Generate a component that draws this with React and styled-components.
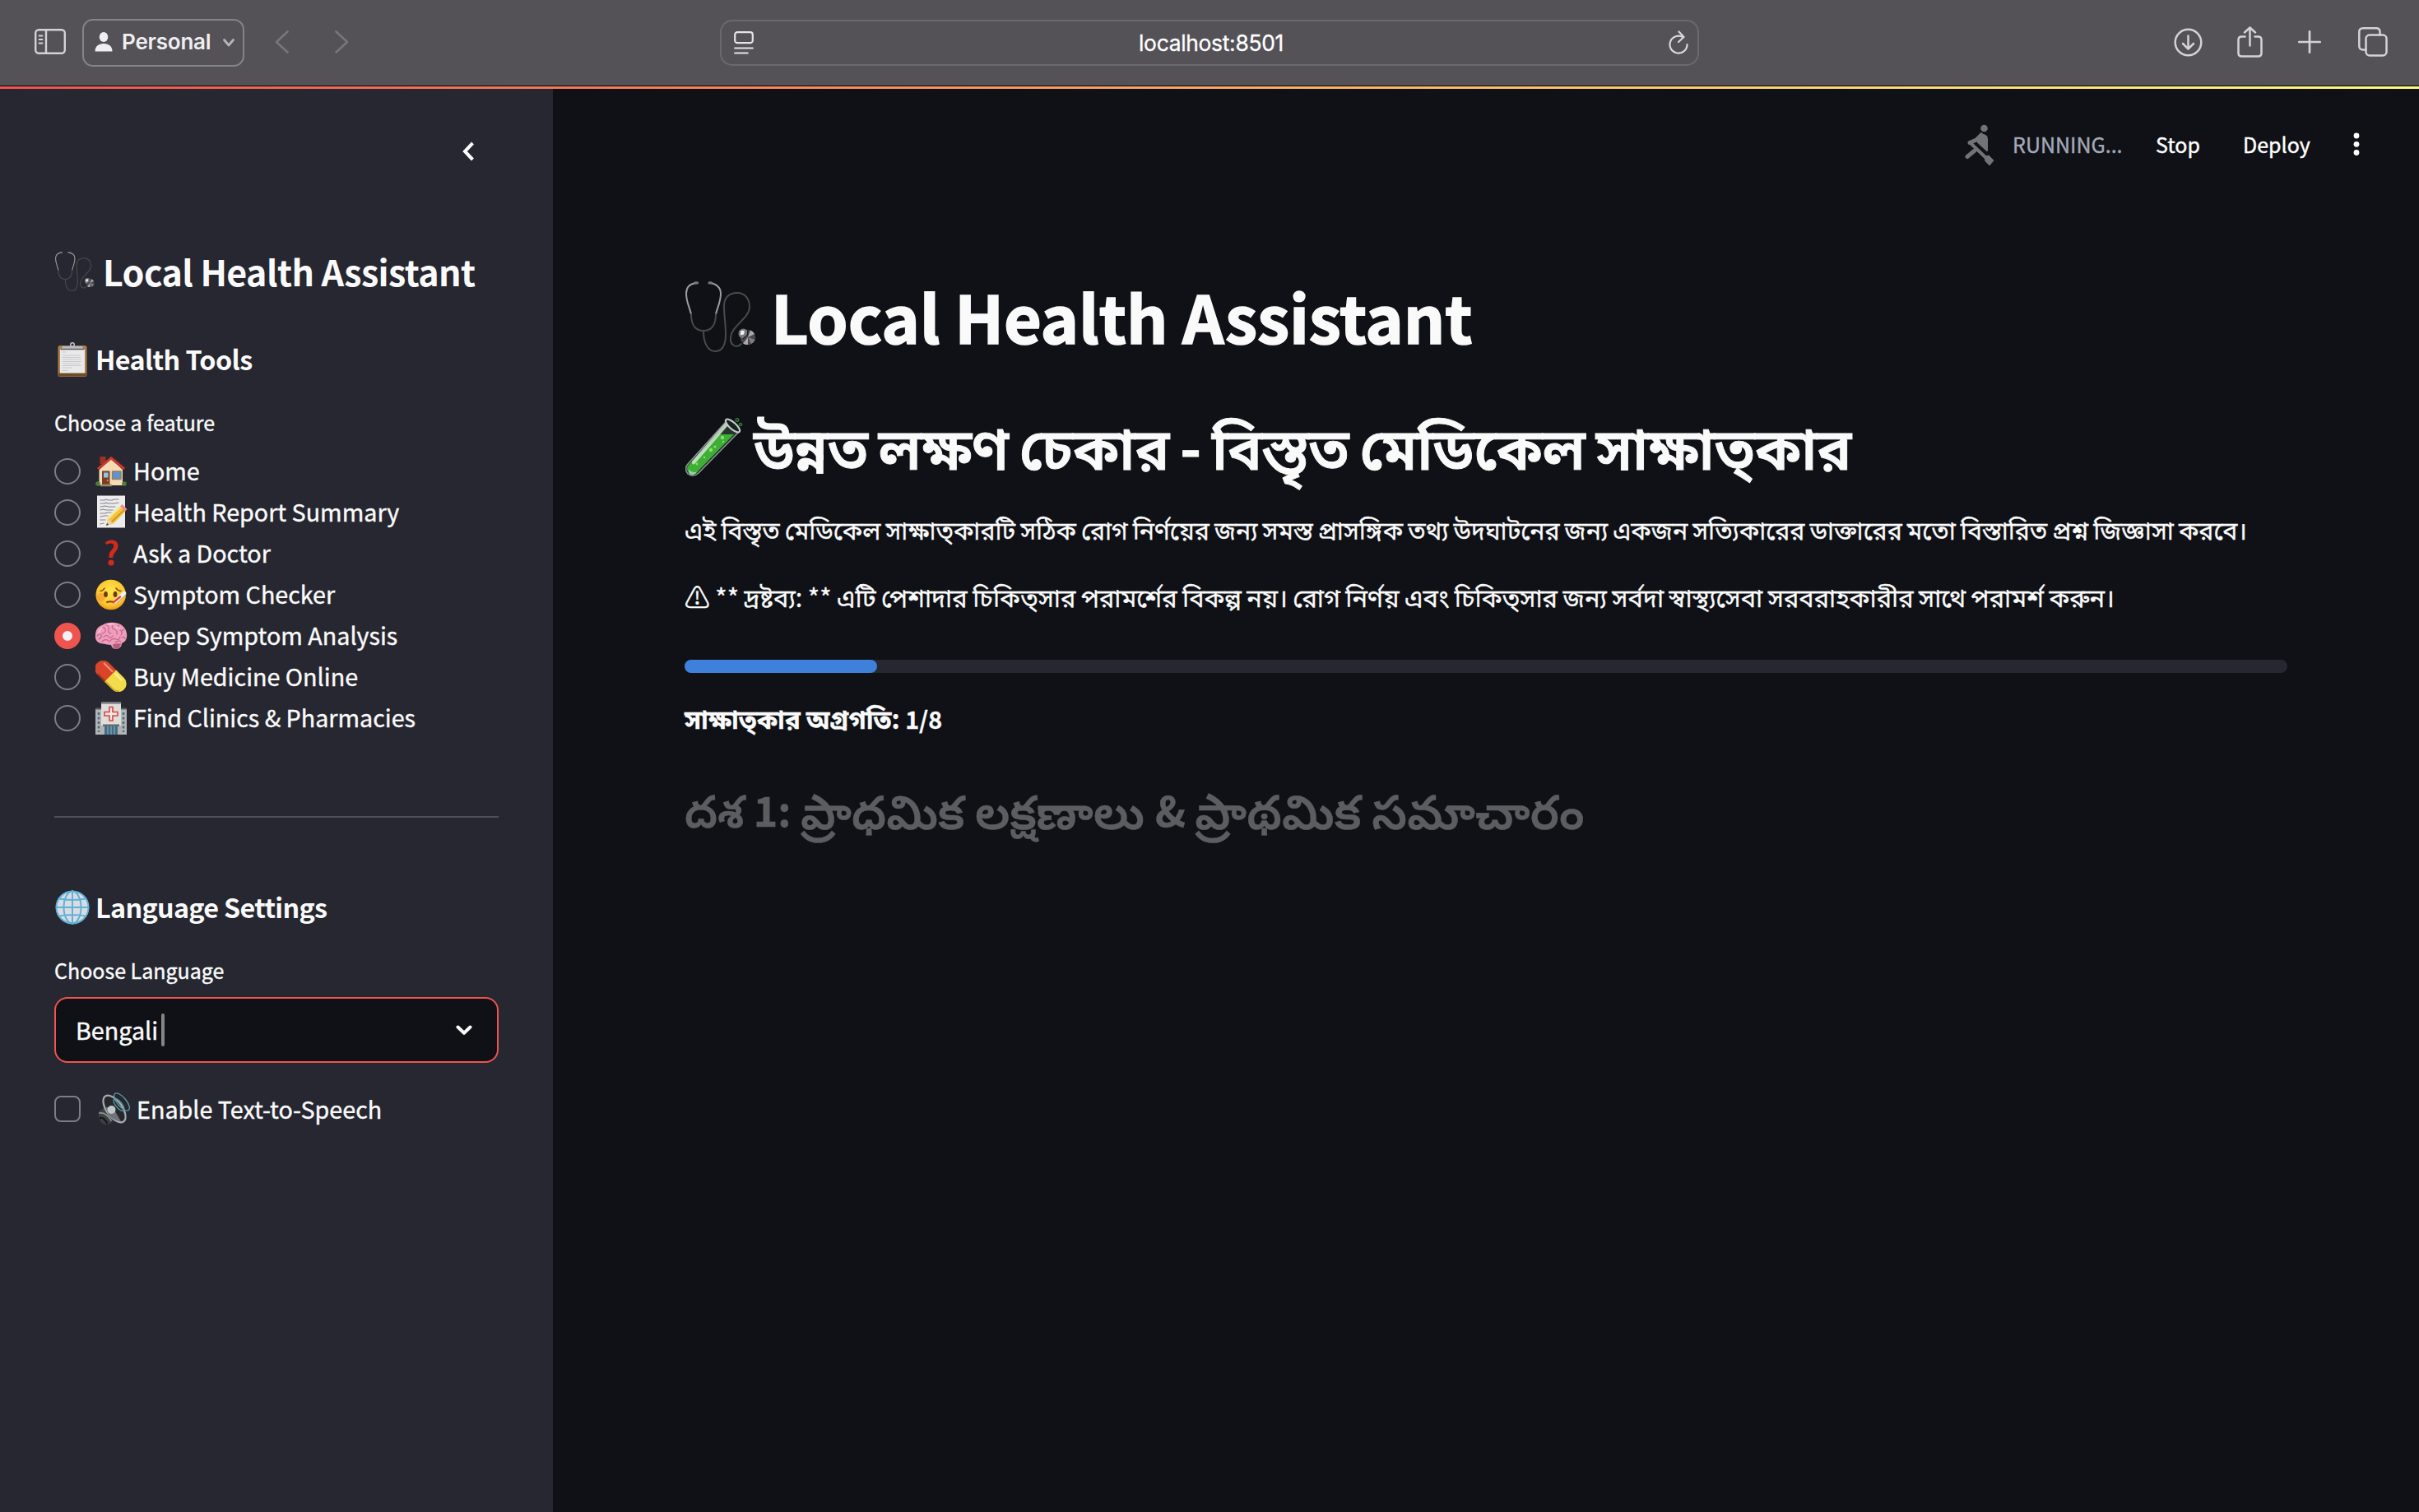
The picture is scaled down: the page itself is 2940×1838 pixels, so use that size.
import React from "react";
import styled, { createGlobalStyle } from "styled-components";

const sans = `"Noto Sans CJK SC", "Noto Sans", "Noto Sans Bengali", "Noto Sans Telugu", sans-serif`;

const Global = createGlobalStyle`
  * { box-sizing: border-box; }
  body { margin: 0; background: #0f1116; }
`;

const Page = styled.div`
  width: 2940px;
  height: 1838px;
  display: flex;
  flex-direction: column;
  background: #0f1116;
  color: #fafafa;
  font-family: ${sans};
  overflow: hidden;
`;

const BrowserBar = styled.header`
  flex: none;
  height: 104px;
  display: flex;
  align-items: flex-start;
  background: #545257;
  font-family: Inter, "Liberation Sans", sans-serif;
`;

const Icon = styled.svg`
  display: block;
  flex: none;
  width: ${(p) => p.$w}px;
  height: ${(p) => p.$h}px;
  margin-left: ${(p) => p.$ml || 0}px;
  margin-right: ${(p) => p.$mr || 0}px;
  margin-top: ${(p) => p.$mt || 0}px;
  fill: none;
  stroke-linecap: round;
  stroke-linejoin: round;
`;

const ProfileButton = styled.button`
  display: flex;
  align-items: center;
  width: 197px;
  height: 58px;
  margin: 23px 0 0 20px;
  padding: 0 10px 0 13px;
  border: 2px solid #858487;
  border-radius: 13px;
  background: none;
  color: #efeef0;
  font: 600 26px Inter, sans-serif;
  letter-spacing: -0.2px;
`;

const ProfileName = styled.span`
  width: 122px;
  margin-left: 11px;
  margin-top: -3px;
  text-align: left;
  white-space: nowrap;
  line-height: 30px;
`;

const AddressBar = styled.div`
  display: flex;
  align-items: center;
  justify-content: space-between;
  width: 1190px;
  height: 56px;
  margin: 24px 0 0 451px;
  padding: 0 11px 0 15px;
  border: 2px solid #6a696d;
  border-radius: 15px;
  color: #fff;
  font-size: 26.4px;
  letter-spacing: -0.3px;
  -webkit-text-stroke: 0.3px #fff;
`;

const Progress = styled.div`
  flex: none;
  height: 4px;
  border-top: 1px solid #000;
  background: linear-gradient(to right, #f0544f, #f98a5f 33%, #ffcf70 70%, #fffd80);
`;

const Body = styled.div`
  flex: 1;
  display: flex;
`;

const Sidebar = styled.aside`
  flex: none;
  width: 672px;
  padding: 0 66px;
  background: #262730;
  display: flex;
  flex-direction: column;
`;

const CollapseRow = styled.div`
  display: flex;
  justify-content: flex-end;
  height: 192px;
  padding: 64px 29px 0 0;
`;

const Heading = styled.h2`
  display: flex;
  align-items: center;
  margin: ${(p) => p.$top || 0}px 0 0;
  height: ${(p) => p.$h}px;
  font-size: ${(p) => p.$size}px;
  font-weight: ${(p) => p.$weight || 600};
  line-height: ${(p) => p.$h}px;
  letter-spacing: ${(p) => p.$track || 0}px;
  color: ${(p) => p.$color || "#fafafa"};
  white-space: nowrap;
  -webkit-text-stroke: ${(p) => p.$stroke || 0}px currentColor;
`;

/* Indic script runs are set slightly larger than the Latin text around them. */
const Script = styled.span`
  font-size: ${(p) => p.$scale}em;
  word-spacing: ${(p) => p.$gap || 0}px;
  white-space: pre;
`;

const EmojiSlot = styled.span`
  flex: none;
  display: flex;
  align-items: center;
  width: ${(p) => p.$w}px;
  height: 100%;
  padding-left: ${(p) => p.$pl || 0}px;
  padding-top: ${(p) => p.$pt || 0}px;
`;

const FieldLabel = styled.label`
  display: block;
  height: 40px;
  margin-top: ${(p) => p.$top}px;
  font-size: 25px;
  line-height: 40px;
  -webkit-text-stroke: 0.4px currentColor;
`;

const RadioList = styled.div`
  margin-top: 15px;
  display: flex;
  flex-direction: column;
`;

const OptionRow = styled.div`
  display: flex;
  align-items: center;
  height: 50px;
  margin-top: ${(p) => p.$top || 0}px;
  font-size: 28.7px;
  line-height: ${(p) => p.$line || 48}px;
`;

const Radio = styled.span`
  flex: none;
  width: 32px;
  height: 32px;
  border-radius: 50%;
  border: ${(p) => (p.$on ? "10px solid #f0544f" : "2px solid #7d7d83")};
  background: ${(p) => (p.$on ? "#f0f2f6" : "transparent")};
`;

const Checkbox = styled.span`
  flex: none;
  width: 32px;
  height: 32px;
  border-radius: 8px;
  border: 2px solid #7d7d83;
`;

const OptionText = styled.span`
  height: 50px;
  white-space: nowrap;
  -webkit-text-stroke: 0.4px currentColor;
`;

const Divider = styled.hr`
  width: 100%;
  height: 2px;
  margin: 94px 0 0;
  border: 0;
  background: #4e4f58;
`;

const Select = styled.div`
  display: flex;
  align-items: center;
  height: 80px;
  margin-top: 13px;
  padding: 0 30px 0 24px;
  border: 2px solid #f0544f;
  border-radius: 16px;
  background: #0f1116;
  font-size: 28.7px;
`;

const SelectValue = styled.span`
  line-height: 40px;
  -webkit-text-stroke: 0.4px currentColor;
`;

const Caret = styled.span`
  width: 4px;
  height: 40px;
  margin-left: 4px;
  border-radius: 2px;
  background: #858586;
`;

const Spacer = styled.span`
  flex: 1;
`;

const Main = styled.main`
  flex: 1;
  display: flex;
  flex-direction: column;
  padding: 0 160px;
`;

const StatusBar = styled.div`
  display: flex;
  align-items: center;
  height: 136px;
  margin-right: -88px;
  justify-content: flex-end;
  font-size: 25px;
  line-height: 40px;
`;

const StatusText = styled.span`
  flex: none;
  width: ${(p) => p.$w}px;
  margin-top: -2px;
  color: ${(p) => p.$color || "#fff"};
  white-space: nowrap;
  -webkit-text-stroke: 0.4px currentColor;
`;

const Paragraph = styled.p`
  margin: ${(p) => p.$top}px 0 0;
  height: 50px;
  font-size: 28.7px;
  font-weight: ${(p) => p.$weight || 400};
  line-height: 50px;
  white-space: nowrap;
  -webkit-text-stroke: 0.3px currentColor;
`;

const Track = styled.div`
  height: 16px;
  margin-top: 52px;
  border-radius: 8px;
  background: #262730;
`;

const TrackFill = styled.div`
  width: 12%;
  height: 16px;
  border-radius: 8px;
  background: #3f80da;
`;

function Stethoscope({ size }) {
  return (
    <Icon viewBox="0 0 86 86" $w={size} $h={size}>
      <g strokeWidth="2">
        <path d="M13 2C5 3 1 8 1 15C1 25 5 31 7 40" stroke="#989da6" />
        <path d="M30 2C38 3 43 8 43 15C43 25 39 31 37 40" stroke="#989da6" />
        <path d="M7 40C7 51 11 60 22 60C33 60 37 51 37 40M22 61C22 74 27 85 36 85C46 85 49 75 49 64C49 52 47 42 47 30C47 20 53 14 63 14C73 14 78 22 78 31C78 45 56 54 55 68C54 78 62 82 68 76" stroke="#4b4a4a" />
        <path d="M12 1.800h2.500M29 1.800h2.500" stroke="#77787c" strokeWidth="3.200" />
      </g>
      <circle cx="76" cy="68" r="9.200" fill="#4a484c" />
      <path d="M76 68L79 59.500A9 9 0 0 1 84 64zM76 68L70 75.500A9 9 0 0 0 76 77z" fill="#aaa8ac" />
      <path d="M76 68L84.500 71A9 9 0 0 1 80 76z" fill="#807e83" />
      <circle cx="70.500" cy="63.500" r="6" fill="#77787e" />
      <path d="M67 60.500a4.500 4.500 0 0 1 5 0l-1 4l-4 1z" fill="#f2f3f5" />
      <path d="M76 59.500l-0.500 6l-5 4" stroke="#1c1c20" strokeWidth="1.500" />
    </Icon>
  );
}

function Clipboard() {
  return (
    <Icon viewBox="0 0 36 42" $w={36} $h={42} $ml={4} $mt={2}>
      <rect x="0.5" y="4" width="35" height="38" rx="2.5" fill="#a97f4b" />
      <rect x="1" y="37.500" width="34" height="4" rx="1.500" fill="#6e4c25" />
      <rect x="3" y="8" width="30" height="29.500" fill="#e9e9ea" />
      <path d="M6 5h24l2 4H4z" fill="#b9bcc6" />
      <path d="M4 8.500h28" stroke="#5d5d64" strokeWidth="1.500" />
      <circle cx="18" cy="3" r="2.300" stroke="#b9bcc6" strokeWidth="1.600" />
      <path d="M6 12h4M6 16h21M6 18.500h22M6 21h22M6 23.500h22M6 26h21M6 28.500h22M6 31h11M6 34.500h6" stroke="#c9c9cc" strokeWidth="1.100" />
    </Icon>
  );
}

function House() {
  return (
    <Icon viewBox="0 0 38 38" $w={38} $h={38}>
      <path d="M5.500 1h7v9h-7z" fill="#9c3125" />
      <path d="M19 3L4.500 17v19h28.500V17z" fill="#f3dcb4" />
      <path d="M19 1L2 15L4 17L19 4.500L34 17l2-2z" fill="#cc3a30" stroke="#a52b24" strokeWidth="0.600" />
      <rect x="8" y="18.500" width="9.500" height="18" fill="#7c3d22" />
      <rect x="10" y="20.500" width="5.500" height="6" fill="#8cc6ee" />
      <circle cx="14.800" cy="30" r="1" fill="#e0b050" />
      <rect x="20.500" y="19" width="10.500" height="9.500" fill="#5d94cf" stroke="#9a7b5a" strokeWidth="1.400" />
      <path d="M7 36h12" stroke="#9b8a78" strokeWidth="2.500" />
      <circle cx="3" cy="34" r="2.800" fill="#4b7f37" />
      <circle cx="35" cy="34" r="2.800" fill="#4b7f37" />
    </Icon>
  );
}

function Memo() {
  return (
    <Icon viewBox="0 0 38 40" $w={38} $h={40} $ml={1} $mt={-2}>
      <rect x="1" y="0.500" width="34" height="39" fill="#ececec" />
      <path d="M5 6h5l2-1l3 1h4l3-1h5M5 10l4 0l3-1l2 1h8l5-1M5 14l6-1l4 1h8M5 18l3-1l4 1h8M5 22h6l3-1h4M5 26l5-1h4M5 30h6M5 35l4-1" stroke="#85858a" strokeWidth="1.200" />
      <path d="M12 37l2.500-9L29 13.500l6.500 6L21 34.500z" fill="#f3c33c" />
      <path d="M14 29L30 14" stroke="#fbe184" strokeWidth="2" />
      <path d="M18 33L34 18" stroke="#c88d1d" strokeWidth="1.600" />
      <path d="M12 37l2.500-8.500l6 5.500z" fill="#e8cfa4" />
      <path d="M12 37l1-3l2 1.700z" fill="#333" />
      <path d="M29 13.500l2.500-2.500l6 6l-2.500 2.500z" fill="#ef8d92" />
    </Icon>
  );
}

function Question() {
  return (
    <Icon viewBox="0 0 18 32" $w={18} $h={32} $ml={11} $mt={-2}>
      <path d="M1 3.500C3 1.500 5.500 0.500 8.500 0.500C13.500 0.500 16.500 3.200 16.500 7.500C16.500 11 14.500 13.500 12.500 16C11 18 10.300 19 10.300 22H5.500C5.300 18 6 16 7.800 13.500C9.500 11.300 11.300 9.800 11.300 7.500C11.300 5.500 10 4.300 7.500 4.500C5.500 4.600 3.500 5.200 2 6z" fill="#d42a1e" />
      <circle cx="8" cy="28" r="3.600" fill="#d42a1e" />
    </Icon>
  );
}

function SickFace() {
  return (
    <Icon viewBox="0 0 38 38" $w={38} $h={38} $mt={-1}>
      <defs>
        <radialGradient id="face" cx="50%" cy="40%" r="60%">
          <stop offset="0" stopColor="#ffe64d" />
          <stop offset="0.750" stopColor="#fdc52f" />
          <stop offset="1" stopColor="#e89a1c" />
        </radialGradient>
      </defs>
      <circle cx="18.700" cy="19" r="18.300" fill="url(#face)" />
      <circle cx="7" cy="22" r="5" fill="#f58a3c" opacity="0.500" />
      <ellipse cx="12.500" cy="18.500" rx="2.400" ry="3.400" fill="#6b3d13" />
      <ellipse cx="24" cy="18.500" rx="2.400" ry="3.400" fill="#6b3d13" />
      <path d="M6 14.500q3.500-0.500 5-3.500M25 11q2 3 6 3.500" stroke="#8b5417" strokeWidth="1.600" />
      <path d="M14 28q4-1.500 8 0" stroke="#8b4414" strokeWidth="2" />
      <path d="M24 27L35 17" stroke="#eef0f4" strokeWidth="4.500" />
      <path d="M22 28L30 21.500" stroke="#e2433b" strokeWidth="2.400" />
      <path d="M26 29L37 19" stroke="#9aa3b5" strokeWidth="0.800" />
    </Icon>
  );
}

function Brain() {
  return (
    <Icon viewBox="0 0 40 34" $w={40} $h={34} $ml={-1} $mt={-1}>
      <path d="M20 28C17 27.500 14 27.500 10 26.500C4 26.500 0 22 1 16C1 11 3 6 9 4C13 1 19 0 25 1C33 2 38 7 39 14C40 20 38 24 33 26C33 30 30 33 26 33C22 33 20.500 30 20 28z" fill="#ee9dbb" />
      <path d="M22 27.500q5-2 10-1q-1 6-6 6.500q-3.500 0-4-5.500z" fill="#b0607a" />
      <g stroke="#c4668c" strokeWidth="1.200">
        <path d="M3 17q4-4 5-1t-3 5M7 8q5-3 6 1t-4 5M14 4q4 0 3 5t3 5M22 3q-2 5 2 6t3 6M29 4q-2 4 2 6t1 6M36 9q-4 1-3 5M11 18q4-3 6 0t5-1M9 24q4-4 8-1M18 24q4-5 8-3t5-3M33 19q4-2 4 2M25 25q4-3 7-1" />
      </g>
      <path d="M5 13q1-4 4-6M17 3q4-1 6 0M26 6q3 1 4 3" stroke="#fbcbdc" strokeWidth="1.500" />
    </Icon>
  );
}

function Pill() {
  return (
    <Icon viewBox="0 0 38 38" $w={38} $h={38} $mt={-2}>
      <g transform="rotate(45 18.500 19)">
        <path d="M19 9H5.500A10 10 0 0 0 5.500 29H19z" fill="#d9452a" />
        <path d="M18 9H31.500A10 10 0 0 1 31.500 29H18z" fill="#f3dc4c" />
        <path d="M19 28H32a8.500 8.500 0 0 0 6-3" stroke="#d2a827" strokeWidth="1.800" />
        <path d="M6 28H17" stroke="#a82c1c" strokeWidth="1.800" />
        <path d="M2 13.500h14" stroke="#f2907a" strokeWidth="2.200" />
        <path d="M20 13h11" stroke="#fff29a" strokeWidth="2.200" />
      </g>
    </Icon>
  );
}

function Hospital() {
  return (
    <Icon viewBox="0 0 38 40" $w={38} $h={40}>
      <rect x="0" y="9" width="38" height="31" fill="#b4b5b2" />
      <path d="M1 8.500h36" stroke="#555b60" strokeWidth="2" />
      <rect x="7" y="1" width="24" height="28" fill="#dededb" />
      <path d="M8 1.500h22" stroke="#83878a" strokeWidth="2.500" />
      <path d="M4 13v24M34 13v24" stroke="#46708c" strokeWidth="2.600" strokeDasharray="3 2.500" strokeLinecap="butt" />
      <path d="M17 6.500h4v6h6v4.500h-6v6h-4v-6h-6v-4.500h6z" fill="#f5e9e8" stroke="#d8453f" strokeWidth="1.600" strokeLinejoin="miter" />
      <rect x="9" y="27.500" width="20" height="2.500" fill="#66696c" />
      <rect x="11" y="30" width="16" height="10" fill="#3f7088" />
      <path d="M15 30v10M19 30v10M23 30v10" stroke="#9bb0ba" strokeWidth="1" />
    </Icon>
  );
}

function Globe() {
  return (
    <Icon viewBox="0 0 42 42" $w={42} $h={42} $ml={1} $mt={2}>
      <circle cx="21" cy="21" r="20" fill="#d9dde2" />
      <g stroke="#62b1d8" strokeWidth="2">
        <circle cx="21" cy="21" r="19.500" />
        <ellipse cx="21" cy="21" rx="10.500" ry="19.500" />
        <path d="M21 1v40M1.500 21h39M5 10.500q16 3 32 0M5 31.500q16-3 32 0" />
      </g>
    </Icon>
  );
}

function Speaker() {
  return (
    <Icon viewBox="0 0 40 40" $w={40} $h={40} $ml={1}>
      <path d="M1 24q3-5 9-5l9 12q-1 7-8 8q-6 0-8-4q-3-5-2-11z" fill="#3d4043" />
      <path d="M2 25q8-1 14 9" stroke="#8d9194" strokeWidth="1.800" />
      <path d="M3 31q4-1 8 6" stroke="#15171a" strokeWidth="2.400" />
      <ellipse cx="20" cy="20" rx="19" ry="9.500" transform="rotate(54 20 20)" fill="#26292c" stroke="#a6abb0" strokeWidth="2.200" />
      <path d="M9 18l9 0l10 17q-8 0-15-7z" fill="#6e7479" />
      <circle cx="16.500" cy="21" r="5" fill="#c0c6ca" />
      <g stroke="#5f9aa6" strokeWidth="1.300">
        <ellipse cx="29" cy="11.500" rx="13" ry="5.500" transform="rotate(50 29 11.500)" />
        <ellipse cx="25.500" cy="15" rx="9" ry="3.800" transform="rotate(50 25.500 15)" />
      </g>
    </Icon>
  );
}

function TestTube() {
  return (
    <Icon viewBox="0 0 70 72" $w={70} $h={72}>
      <path d="M49 5L65 17L16 67Q9 73 3 68Q-2 62 3 56z" fill="#25352b" stroke="#8c9891" strokeWidth="1.500" />
      <path d="M41 20L59 20L15 65Q9 70 4 66Q0 62 4 57z" fill="#3fae35" />
      <path d="M4 62Q8 68 15 65L12 68Q7 71 4 67z" fill="#86d8a0" />
      <path d="M49 9L10 54" stroke="#d3e6d3" strokeWidth="4.500" opacity="0.850" />
      <ellipse cx="57.500" cy="9.500" rx="11" ry="4" transform="rotate(42 57.500 9.500)" fill="#1a2020" stroke="#c7cccb" strokeWidth="2.200" />
      <g fill="#82e26b">
        <circle cx="45" cy="24" r="2.200" /><circle cx="36" cy="35" r="1.600" /><circle cx="31" cy="39" r="2.200" /><circle cx="23" cy="48" r="1.300" /><circle cx="46" cy="29" r="1.200" /><circle cx="14" cy="56" r="1.400" />
      </g>
      <g stroke="#2d7a33" strokeWidth="1.500">
        <circle cx="63" cy="2.500" r="1.800" /><circle cx="67" cy="8" r="1.600" />
      </g>
    </Icon>
  );
}

const features = [
  { art: <House />, text: "Home" },
  { art: <Memo />, text: "Health Report Summary" },
  { art: <Question />, text: "Ask a Doctor" },
  { art: <SickFace />, text: "Symptom Checker" },
  { art: <Brain />, text: "Deep Symptom Analysis", on: true },
  { art: <Pill />, text: "Buy Medicine Online" },
  { art: <Hospital />, text: "Find Clinics & Pharmacies" },
];

function Toolbar() {
  return (
    <BrowserBar>
      <Icon viewBox="0 0 38 31" $w={38} $h={31} $ml={42} $mt={35} stroke="#d3d2d6" strokeWidth="2.400">
        <rect x="1.200" y="1.200" width="35.600" height="28.600" rx="4" />
        <path d="M14 1.500V29.500" />
        <path d="M5.500 8.500h4M5.500 13h4M5.500 17.500h4" strokeWidth="1.900" />
      </Icon>
      <ProfileButton>
        <Icon viewBox="0 0 22 24" $w={22} $h={24} $mt={-3}>
          <ellipse cx="11" cy="6" rx="5.300" ry="6" fill="#efeef0" />
          <path d="M0.500 23.500c0-6 4-9.500 10.500-9.500s10.500 3.500 10.500 9.500z" fill="#efeef0" />
        </Icon>
        <ProfileName>Personal</ProfileName>
        <Icon viewBox="0 0 14 10" $w={14} $h={10} $ml={1} stroke="#b4b3b6" strokeWidth="2.800">
          <path d="M1.500 1.500L7 8l5.500-6.500" />
        </Icon>
      </ProfileButton>
      <Icon viewBox="0 0 17 28" $w={17} $h={28} $ml={37} $mt={37} stroke="#77767a" strokeWidth="2.600">
        <path d="M15.500 1.500L2 14l13.500 12.500" />
      </Icon>
      <Icon viewBox="0 0 17 28" $w={17} $h={28} $ml={56} $mt={37} stroke="#77767a" strokeWidth="2.600">
        <path d="M1.500 1.500L15 14L1.500 26.500" />
      </Icon>
      <AddressBar>
        <Icon viewBox="0 0 24 28" $w={24} $h={28} stroke="#e4e3e6" strokeWidth="2.200">
          <rect x="1.200" y="1.200" width="21.600" height="13" rx="3" />
          <path d="M1.200 20.500h21.600M1.200 26.500h15.500" />
        </Icon>
        <span>localhost:8501</span>
        <Icon viewBox="0 0 24 30" $w={24} $h={30} stroke="#d9d8db" strokeWidth="2.200">
          <path d="M17.500 8.200A10.500 10.500 0 1 0 22.500 17" />
          <path d="M12.500 1.500L18.500 8L12 14" />
        </Icon>
      </AddressBar>
      <Icon viewBox="0 0 35 35" $w={35} $h={35} $ml={577} $mt={34} stroke="#d3d2d6" strokeWidth="2.500">
        <circle cx="17.500" cy="17.500" r="15.800" />
        <path d="M17.500 9.500v15.500M11 19l6.500 6.500L24 19" />
      </Icon>
      <Icon viewBox="0 0 31 38" $w={31} $h={38} $ml={42} $mt={32} stroke="#d3d2d6" strokeWidth="2.500">
        <path d="M9.500 12.500H5.500Q1.500 12.500 1.500 16.500V32.500Q1.500 36.500 5.500 36.500H25.500Q29.500 36.500 29.500 32.500V16.500Q29.500 12.500 25.500 12.500H21.500" />
        <path d="M15.500 23.500V1.500M9 7.500l6.500-6L22 7.500" />
      </Icon>
      <Icon viewBox="0 0 28 28" $w={28} $h={28} $ml={43} $mt={37} stroke="#d3d2d6" strokeWidth="2.700">
        <path d="M14 1.300v25.400M1.300 14h25.400" />
      </Icon>
      <Icon viewBox="0 0 36 36" $w={36} $h={36} $ml={45} $mt={33} stroke="#d3d2d6" strokeWidth="2.500">
        <rect x="9.500" y="9.500" width="25" height="25" rx="4.500" />
        <path d="M9.500 27.500H6Q1.300 27.500 1.300 23V6Q1.300 1.300 6 1.300H22Q26.500 1.300 26.500 6V9.500" />
      </Icon>
    </BrowserBar>
  );
}

export default function App() {
  return (
    <Page>
      <Global />
      <Toolbar />
      <Progress />
      <Body>
        <Sidebar>
          <CollapseRow>
            <Icon viewBox="0 0 15 24" $w={15} $h={24} stroke="#fff" strokeWidth="4">
              <path d="M12.500 2L3 12l9.500 10" strokeLinecap="butt" strokeLinejoin="miter" />
            </Icon>
          </CollapseRow>
          <Heading $h={58} $size={43} $track={-0.6}>
            <EmojiSlot $w={59} $pl={1} $pt={2}><Stethoscope size={48} /></EmojiSlot>
            <span>Local Health Assistant</span>
          </Heading>
          <Heading $h={44} $size={32.3} $top={56} $track={-0.6}>
            <EmojiSlot $w={50}><Clipboard /></EmojiSlot>
            <span>Health Tools</span>
          </Heading>
          <FieldLabel $top={35}>Choose a feature</FieldLabel>
          <RadioList>
            {features.map((f) => (
              <OptionRow key={f.text}>
                <Radio $on={f.on} />
                <EmojiSlot $w={64} $pl={18}>{f.art}</EmojiSlot>
                <OptionText>{f.text}</OptionText>
              </OptionRow>
            ))}
          </RadioList>
          <Divider />
          <Heading $h={44} $size={32.3} $top={86} $track={-0.68}>
            <EmojiSlot $w={50}><Globe /></EmojiSlot>
            <span>Language Settings</span>
          </Heading>
          <FieldLabel $top={35}>Choose Language</FieldLabel>
          <Select>
            <SelectValue>Bengali</SelectValue>
            <Caret />
            <Spacer />
            <Icon viewBox="0 0 20 13" $w={20} $h={13} stroke="#fafafa" strokeWidth="4">
              <path d="M2.500 2.500L10 9.800l7.500-7.300" />
            </Icon>
          </Select>
          <OptionRow $top={31} $line={50}>
            <Checkbox />
            <EmojiSlot $w={68} $pl={20}><Speaker /></EmojiSlot>
            <OptionText>Enable Text-to-Speech</OptionText>
          </OptionRow>
        </Sidebar>
        <Main>
          <StatusBar>
            <Icon viewBox="0 0 36 50" $w={36} $h={50} $mr={22} stroke="#727377">
              <circle cx="23.500" cy="5" r="4.300" fill="#727377" stroke="none" />
              <path d="M6 22.500L14 19L20 13" strokeWidth="5" />
              <path d="M16 17q5-6 9-3q2 1 2 4v14l-11-10z" fill="#727377" strokeWidth="2" />
              <path d="M7 23L28 43" strokeWidth="4" />
              <path d="M3 39.500L12 32" strokeWidth="5" />
              <path d="M25 39l4-1l6 6l-5 6l-5-5z" fill="#727377" strokeWidth="1" />
            </Icon>
            <StatusText $w={174} $color="#a3a8b8">RUNNING...</StatusText>
            <StatusText $w={106}>Stop</StatusText>
            <StatusText $w={134}>Deploy</StatusText>
            <Icon viewBox="0 0 8 30" $w={8} $h={30}>
              <g fill="#fff"><circle cx="4" cy="4" r="3.400" /><circle cx="4" cy="14.300" r="3.400" /><circle cx="4" cy="24.500" r="3.400" /></g>
            </Icon>
          </StatusBar>
          <Heading as="h1" $h={106} $size={79} $weight={700} $top={87} $track={-0.15} $stroke={1.6}>
            <EmojiSlot $w={105} $pl={1} $pt={2}><Stethoscope size={86} /></EmojiSlot>
            <span>Local Health Assistant</span>
          </Heading>
          <Heading $h={90} $size={64.6} $top={59} $stroke={0.9}>
            <EmojiSlot $w={84} $pl={1} $pt={5}><TestTube /></EmojiSlot>
            <Script $scale={1.078} $gap={-2.9}>উন্নত লক্ষণ চেকার - বিস্তৃত মেডিকেল সাক্ষাত্কার</Script>
          </Heading>
          <Paragraph $top={32}>
            <Script $scale={1.056} $gap={-0.7}>এই বিস্তৃত মেডিকেল সাক্ষাত্কারটি সঠিক রোগ নির্ণয়ের জন্য সমস্ত প্রাসঙ্গিক তথ্য উদঘাটনের জন্য একজন সত্যিকারের ডাক্তারের মতো বিস্তারিত প্রশ্ন জিজ্ঞাসা করবে।</Script>
          </Paragraph>
          <Paragraph $top={32}>
            <Script $scale={1.073} $gap={-0.4}>⚠ ** দ্রষ্টব্য: ** এটি পেশাদার চিকিত্সার পরামর্শের বিকল্প নয়। রোগ নির্ণয় এবং চিকিত্সার জন্য সর্বদা স্বাস্থ্যসেবা সরবরাহকারীর সাথে পরামর্শ করুন।</Script>
          </Paragraph>
          <Track><TrackFill /></Track>
          <Paragraph $top={30} $weight={700}>
            <Script $scale={1.088}>সাক্ষাত্কার অগ্রগতি:</Script> 1/8
          </Paragraph>
          <Heading as="h3" $h={74} $size={50} $top={48} $color="#5c5d61" $stroke={0.5}>
            <Script $scale={1.08}>దశ</Script>
            <Script $scale={1}> 1: </Script>
            <Script $scale={1.135}>ప్రాధమిక లక్షణాలు </Script>
            <Script $scale={1}>& </Script>
            <Script $scale={1.15}>ప్రాథమిక సమాచారం</Script>
          </Heading>
        </Main>
      </Body>
    </Page>
  );
}
